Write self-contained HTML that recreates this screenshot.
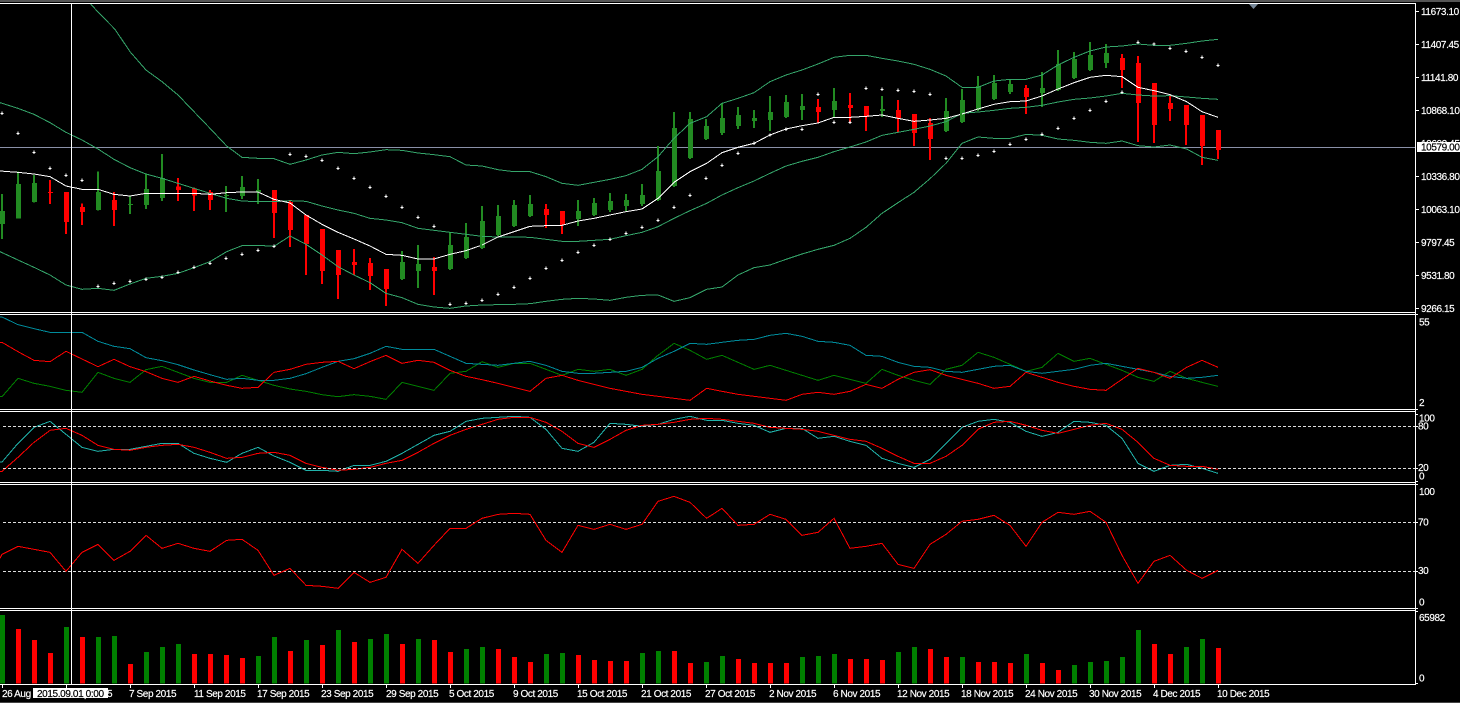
<!DOCTYPE html>
<html><head><meta charset="utf-8"><title>Chart</title>
<style>
html,body{margin:0;padding:0;background:#000;width:1460px;height:703px;overflow:hidden}
svg{display:block;position:absolute;left:0;top:0}
text{font-family:"Liberation Sans",sans-serif;font-size:10px;fill:#fff;stroke:#fff;stroke-width:.18px;letter-spacing:-.4px}
.l{fill:none;stroke-width:3;shape-rendering:crispEdges;stroke-linejoin:miter}
.u{stroke:#35a56a}.w{stroke:#fff}.t{stroke:#008b9b}.r{stroke:#f00}.g{stroke:#008000}.c{stroke:#20b2aa}
.sar{fill:none;stroke:none;marker-start:url(#p);marker-mid:url(#p);marker-end:url(#p)}
.wk{fill:none;stroke-width:6;shape-rendering:crispEdges}
.bd{fill:none;stroke-width:15;shape-rendering:crispEdges}
.vg{fill:none;stroke:#008000;stroke-width:15;shape-rendering:crispEdges}
.vr{fill:none;stroke:#f00;stroke-width:15;shape-rendering:crispEdges}
</style></head><body>
<svg width="1460" height="703" viewBox="0 0 1460 703" xmlns="http://www.w3.org/2000/svg">
<defs>
<marker id="p" markerUnits="userSpaceOnUse" markerWidth="12" markerHeight="12" refX="6" refY="6" overflow="visible"><path d="M1 6h10M6 1v10" fill="none" stroke="#fff" stroke-width="3.3" shape-rendering="crispEdges"/></marker>
<clipPath id="main"><rect x="0" y="4" width="1415" height="308"/></clipPath>
</defs>
<rect x="0" y="0" width="1460" height="703" fill="#000"/>
<rect x="0" y="0" width="1460" height="2" fill="#555"/>
<rect x="0" y="702" width="1460" height="1" fill="#444"/>

<!-- bid line -->
<rect x="0" y="147" width="1415" height="1" fill="#8a90a8"/>

<g clip-path="url(#main)">
<!-- Segment A -->
<g transform="scale(.33333)">
<path class="wk" stroke="#228b22" d="M6 582V717M54 514V655M102 525V608M294 514V632M390 590V642M438 520V627M486 462V603M678 558V636M726 528V597M774 537V612M1206 753V840M1254 735V864M1350 697V810M1398 669V777"/>
<path class="bd" stroke="#228b22" transform="translate(1.5 0)" d="M6 633V672M54 552V655M102 549V606M294 576V630M390 612V615M438 567V615M486 534V594M678 585V588M726 561V588M774 570V576M1206 786V837M1254 792V813M1350 735V807M1398 711V774"/>
<path class="wk" stroke="#f00" d="M150 540V612M198 576V702M246 610V675M342 576V678M534 534V603M582 562V633M630 570V630M822 570V714M870 603V741M918 645V825M966 687V852M1014 750V897M1062 747V825M1110 774V870M1158 807V918M1302 771V885"/>
<path class="bd" stroke="#f00" transform="translate(1.5 0)" d="M150 576V579M198 576V666M246 621V636M342 600V630M534 560V570M582 565V587M630 576V600M822 570V639M870 606V690M918 645V732M966 687V813M1014 750V825M1062 786V795M1110 789V828M1158 807V867M1302 801V813"/>
<polyline class="l u" points="272,12 294,36 345,88 390,155 438,210 486,245 534,285 582,335 630,385 680,438 726,472 774,475 822,476 870,493 918,480 966,465 1014,457 1062,461 1110,456 1158,449 1206,451 1254,459 1302,464 1350,470 1398,495 1446,498"/>
<polyline class="l u" points="0,308 54,325 102,343 150,368 198,397 246,420 294,447 342,478 390,503 438,522 486,535 534,550 582,565 630,580 680,595 726,603 774,605 822,605 870,602 918,604 966,618 1014,630 1062,640 1110,655 1158,660 1206,668 1254,685 1302,691 1350,697 1398,703 1446,709"/>
<polyline class="l u" points="0,755 54,780 102,802 150,825 198,855 246,868 294,865 342,871 390,852 438,835 486,829 534,820 582,803 630,785 680,755 726,737 774,736 822,739 870,708 918,733 966,765 1014,800 1062,825 1110,848 1158,880 1206,893 1254,913 1302,921 1350,925 1398,918 1446,915"/>
<polyline class="l w" points="0,513 54,517 102,522 150,530 198,558 246,568 294,568 342,583 390,588 438,580 486,580 534,580 582,580 630,583 680,578 726,576 774,576 822,598 870,609 918,645 966,673 1014,697 1062,717 1110,738 1158,763 1206,766 1254,777 1302,777 1350,763 1398,752 1446,735"/>
<polyline class="sar" points="6,340 54,400 102,457 150,505 198,526 246,541 294,859 342,850 390,844 438,838 486,832 534,817 582,802 630,790 678,775 726,763 774,751 822,739 870,463 918,469 966,481 1014,505 1062,535 1110,562 1158,589 1206,622 1254,652 1302,679 1350,913 1398,910"/>
</g>
<!-- Segment B -->
<g transform="translate(480 0) scale(.33333)">
<path class="wk" stroke="#228b22" d="M6 618V747M54 615V708M102 600V681M150 585V651M294 600V678M342 594V648M390 579V636M438 582V633M486 552V618M534 438V603M582 336V561M630 336V477M678 357V420M726 309V405M774 321V387M822 330V384M870 288V393M918 285V354M966 282V360M1062 264V354M1206 288V351M1398 294V396"/>
<path class="bd" stroke="#228b22" transform="translate(1.5 0)" d="M6 663V744M54 648V705M102 615V678M150 612V648M294 633V657M342 609V645M390 603V630M438 600V618M486 585V612M534 513V600M582 384V558M630 357V474M678 378V417M726 354V399M774 345V378M822 354V363M870 336V360M918 306V351M966 318V330M1062 303V330M1206 327V333M1398 333V393"/>
<path class="wk" stroke="#f00" d="M198 612V684M246 633V702M1014 297V369M1110 279V366M1158 318V393M1254 300V396M1302 342V438M1350 354V480"/>
<path class="bd" stroke="#f00" transform="translate(1.5 0)" d="M198 627V645M246 633V675M1014 321V336M1110 315V324M1158 318V351M1254 330V354M1302 342V399M1350 369V417"/>
<polyline class="l u" points="6,498 54,509 102,515 150,515 198,530 246,550 294,556 342,547 390,538 438,527 486,508 534,470 582,415 630,370 680,350 726,310 774,295 822,278 870,245 918,225 966,210 1014,192 1062,172 1110,166 1158,166 1206,175 1254,183 1302,193 1350,208 1398,228 1446,262"/>
<polyline class="l u" points="6,709 54,711 102,711 150,712 198,718 246,724 294,724 342,721 390,718 438,707 486,697 534,680 582,655 630,632 680,610 726,585 774,563 822,543 870,520 918,498 966,484 1014,472 1062,455 1110,441 1158,426 1206,406 1254,397 1302,388 1350,378 1398,365 1446,340"/>
<polyline class="l u" points="6,915 54,914 102,913 150,911 198,904 246,898 294,895 342,897 390,901 438,892 486,886 534,885 582,904 630,893 680,868 726,861 774,825 822,803 870,795 918,778 966,762 1014,748 1062,736 1110,715 1158,682 1206,640 1254,608 1302,577 1350,536 1398,490 1446,430"/>
<polyline class="l w" points="6,735 54,711 102,695 150,679 198,677 246,676 294,663 342,655 390,645 438,635 486,627 534,595 582,547 630,515 680,490 726,458 774,442 822,430 870,405 918,387 966,377 1014,369 1062,352 1110,352 1158,349 1206,345 1254,355 1302,364 1350,360 1398,355 1446,342"/>
<polyline class="sar" points="6,901 54,883 102,862 150,835 198,805 246,781 294,757 342,736 390,718 438,700 486,682 534,661 582,622 630,586 678,535 726,496 774,460 822,430 870,405 918,388 966,388 1014,283 1062,367 1110,367 1158,265 1206,268 1254,271 1302,274 1350,283 1398,475"/>
</g>
<!-- Segment C -->
<g transform="translate(960 0) scale(.33333)">
<path class="wk" stroke="#228b22" d="M6 267V369M54 228V333M102 225V300M150 237V282M246 216V321M294 150V273M342 156V237M390 126V213M438 132V204"/>
<path class="bd" stroke="#228b22" transform="translate(1.5 0)" d="M6 300V366M54 258V330M102 249V297M150 252V276M246 264V279M294 192V270M342 177V234M390 165V210M438 159V189"/>
<path class="wk" stroke="#f00" d="M198 255V342M486 162V264M534 168V426M582 249V429M630 288V363M678 315V435M726 345V495M774 390V477"/>
<path class="bd" stroke="#f00" transform="translate(1.5 0)" d="M198 264V291M486 174V210M534 189V309M582 249V375M630 309V327M678 315V375M726 345V438M774 390V450"/>
<polyline class="l u" points="6,262 54,262 102,243 150,238 198,238 246,225 294,195 342,172 390,153 438,141 486,138 534,132 582,136 630,136 680,130 726,123 774,118"/>
<polyline class="l u" points="6,340 54,336 102,331 150,325 198,322 246,316 294,306 342,298 390,294 438,288 486,280 534,285 582,288 630,287 680,291 726,295 774,298"/>
<polyline class="l u" points="6,430 54,411 102,415 150,415 198,403 246,406 294,417 342,421 390,427 438,430 486,423 534,437 582,441 630,435 680,447 726,472 774,481"/>
<polyline class="l w" points="6,342 54,327 102,313 150,305 198,303 246,288 294,267 342,248 390,232 438,226 486,230 534,262 582,272 630,284 680,305 726,335 774,352"/>
<polyline class="sar" points="6,475 54,466 102,454 150,433 198,418 246,403 294,385 342,355 390,331 438,304 486,277 534,127 582,132 630,145 678,154 726,172 774,196"/>
</g>
</g>

<!-- Oscillator pane + stochastic, y origin 310 -->
<g transform="translate(0 310) scale(.33333)">
<polyline class="l g" points="0,260 6,260 54,205 102,220 150,229 198,241 246,247 294,187 342,205 390,217 438,179 486,169 534,187 582,205 630,217 680,217 726,196 774,211 822,226 870,237 918,244 966,254 1014,260 1062,254 1110,259 1158,268 1206,217 1254,229 1302,241 1350,190 1398,184 1446,155"/>
<polyline class="l t" points="0,21 6,21 54,44 102,56 150,67 198,67 246,67 294,94 342,109 390,116 438,143 486,152 534,164 582,180 630,194 680,208 726,205 774,211 822,211 870,205 918,191 966,172 1014,154 1062,146 1110,130 1158,109 1206,118 1254,118 1302,118 1350,139 1398,160 1446,163"/>
<polyline class="l r" points="0,97 6,97 54,125 102,151 150,155 198,124 246,147 294,170 342,148 390,170 438,185 486,205 534,217 582,199 630,213 680,226 726,235 774,232 822,187 870,178 918,163 966,157 1014,154 1062,176 1110,155 1158,136 1206,160 1254,151 1302,157 1350,181 1398,199 1446,209"/>
<polyline class="l c" points="0,456 6,456 54,400 102,352 150,334 198,373 246,412 294,424 342,418 390,418 438,409 486,400 534,400 582,430 630,445 680,457 726,430 774,412 822,438 870,457 918,481 966,481 1014,484 1062,466 1110,466 1158,454 1206,430 1254,403 1302,376 1350,364 1398,334 1446,325"/>
<polyline class="l r" points="0,484 6,484 54,442 102,397 150,361 198,355 246,376 294,406 342,418 390,421 438,412 486,406 534,403 582,412 630,427 680,445 726,442 774,430 822,427 870,436 918,460 966,472 1014,481 1062,478 1110,472 1158,460 1206,451 1254,427 1302,400 1350,376 1398,358 1446,343"/>
</g>
<g transform="translate(480 310) scale(.33333)">
<polyline class="l g" points="6,155 54,172 102,160 150,160 198,178 246,196 294,178 342,184 390,178 438,196 486,178 534,136 582,100 630,121 680,148 726,136 774,157 822,178 870,166 918,181 966,196 1014,211 1062,196 1110,208 1158,220 1206,178 1254,196 1302,211 1350,223 1398,178 1446,166"/>
<polyline class="l t" points="6,163 54,166 102,160 150,154 198,166 246,184 294,190 342,190 390,187 438,184 486,172 534,145 582,124 630,100 680,103 726,97 774,91 822,88 870,76 918,70 966,79 1014,94 1062,97 1110,106 1158,136 1206,139 1254,157 1302,169 1350,172 1398,184 1446,187"/>
<polyline class="l r" points="6,209 54,220 102,232 150,244 198,205 246,196 294,211 342,223 390,235 438,244 486,253 534,259 582,265 630,271 680,235 726,244 774,253 822,259 870,265 918,271 966,253 1014,247 1062,253 1110,244 1158,223 1206,235 1254,208 1302,187 1350,179 1398,196 1446,208"/>
<polyline class="l c" points="6,325 54,322 102,319 150,322 198,358 246,415 294,424 342,397 390,340 438,343 486,349 534,343 582,328 630,319 680,331 726,331 774,340 822,346 870,367 918,355 966,355 1014,385 1062,379 1110,394 1158,406 1206,445 1254,460 1302,472 1350,448 1398,400 1446,352"/>
<polyline class="l r" points="6,343 54,328 102,322 150,322 198,337 246,364 294,400 342,412 390,388 438,361 486,346 534,343 582,337 630,328 680,325 726,328 774,334 822,340 870,352 918,355 966,358 1014,364 1062,376 1110,388 1158,394 1206,415 1254,439 1302,460 1350,460 1398,439 1446,406"/>
</g>
<g transform="translate(960 310) scale(.33333)">
<polyline class="l g" points="6,166 54,127 102,142 150,163 198,184 246,172 294,130 342,154 390,145 438,163 486,181 534,202 582,214 630,184 680,205 726,217 774,229"/>
<polyline class="l t" points="6,187 54,178 102,169 150,166 198,184 246,190 294,184 342,178 390,166 438,160 486,169 534,178 582,187 630,199 680,205 726,202 774,196"/>
<polyline class="l r" points="6,208 54,220 102,235 150,229 198,187 246,202 294,217 342,229 390,238 438,241 486,208 534,175 582,187 630,205 680,172 726,151 774,172"/>
<polyline class="l c" points="6,352 54,334 102,328 150,337 198,364 246,379 294,367 342,334 390,337 438,346 486,385 534,460 582,484 630,466 680,463 726,475 774,490"/>
<polyline class="l r" points="6,406 54,358 102,337 150,334 198,346 246,361 294,370 342,358 390,346 438,340 486,358 534,397 582,445 630,466 680,469 726,469 774,478"/>
</g>

<!-- dashed levels -->
<g stroke="#ddd" stroke-width="1" stroke-dasharray="3 2" shape-rendering="crispEdges">
<path d="M3 426.5H1415M3 468.5H1415M3 522.5H1415M3 571.5H1415"/>
</g>

<!-- RSI + Volume, y origin 480 -->
<g transform="translate(0 480) scale(.33333)">
<polyline class="l r" points="0,235 6,223 54,199 102,208 150,217 198,274 246,217 294,193 342,241 390,214 438,166 486,205 534,190 582,205 630,214 680,181 726,178 774,211 822,286 870,265 918,316 966,319 1014,325 1062,277 1110,307 1158,292 1206,208 1254,250 1302,196 1350,145 1398,145 1446,115"/>
<path class="vg" transform="translate(1.5 0)" d="M6 405V610M198 441V610M294 471V610M342 468V610M438 516V610M486 501V610M534 492V610M774 528V610M822 471V610M918 480V610M1014 450V610M1110 477V610M1158 462V610M1254 477V610M1398 507V610"/>
<path class="vr" transform="translate(1.5 0)" d="M54 447V610M102 480V610M150 519V610M246 471V610M390 552V610M582 522V610M630 522V610M678 525V610M726 534V610M870 513V610M966 495V610M1062 486V610M1206 492V610M1302 480V610M1350 516V610"/>
</g>
<g transform="translate(480 480) scale(.33333)">
<polyline class="l r" points="6,115 54,103 102,100 150,103 198,181 246,217 294,136 342,148 390,133 438,148 486,133 534,64 582,49 630,67 680,115 726,85 774,136 822,133 870,103 918,118 966,166 1014,157 1062,115 1110,205 1158,199 1206,190 1254,253 1302,265 1350,193 1398,163 1446,124"/>
<path class="vg" transform="translate(1.5 0)" d="M6 501V610M198 522V610M246 519V610M486 519V610M534 513V610M678 546V610M726 528V610M966 531V610M1014 528V610M1062 522V610M1254 516V610M1302 501V610"/>
<path class="vr" transform="translate(1.5 0)" d="M54 507V610M102 531V610M150 546V610M294 525V610M342 540V610M390 543V610M438 543V610M582 513V610M630 549V610M774 537V610M822 549V610M870 549V610M918 549V610M1110 537V610M1158 537V610M1206 540V610M1350 507V610M1398 531V610"/>
</g>
<g transform="translate(960 480) scale(.33333)">
<polyline class="l r" points="6,124 54,118 102,106 150,136 198,199 246,127 294,97 342,103 390,94 438,127 486,226 534,310 582,244 630,226 680,271 726,295 774,271"/>
<path class="vg" transform="translate(1.5 0)" d="M6 531V610M198 522V610M342 555V610M390 546V610M438 543V610M486 531V610M534 450V610M678 501V610M726 477V610"/>
<path class="vr" transform="translate(1.5 0)" d="M54 546V610M102 546V610M150 549V610M246 549V610M294 570V610M582 492V610M630 522V610M774 504V610"/>
</g>

<!-- frame lines -->
<g fill="#fff" shape-rendering="crispEdges">
<rect x="0" y="3" width="1416" height="1"/>
<rect x="0" y="312" width="1416" height="1"/>
<rect x="0" y="314" width="1416" height="1"/>
<rect x="0" y="409" width="1416" height="1"/>
<rect x="0" y="411" width="1416" height="1"/>
<rect x="0" y="482" width="1416" height="1"/>
<rect x="0" y="484" width="1416" height="1"/>
<rect x="0" y="608" width="1416" height="1"/>
<rect x="0" y="610" width="1416" height="1"/>
<rect x="0" y="684" width="1416" height="1"/>
<rect x="1415" y="3" width="1" height="682"/>
<!-- crosshair -->
<rect x="71" y="3" width="1" height="682"/>
<!-- right ticks -->
<rect x="1416" y="11" width="3" height="1"/><rect x="1416" y="44" width="3" height="1"/><rect x="1416" y="77" width="3" height="1"/><rect x="1416" y="110" width="3" height="1"/><rect x="1416" y="176" width="3" height="1"/><rect x="1416" y="209" width="3" height="1"/><rect x="1416" y="242" width="3" height="1"/><rect x="1416" y="275" width="3" height="1"/><rect x="1416" y="308" width="3" height="1"/>
<rect x="1416" y="314" width="2" height="1"/><rect x="1416" y="409" width="2" height="1"/><rect x="1416" y="414" width="2" height="1"/><rect x="1416" y="426" width="2" height="1"/><rect x="1416" y="468" width="2" height="1"/><rect x="1416" y="481" width="2" height="1"/><rect x="1416" y="484" width="2" height="1"/><rect x="1416" y="522" width="2" height="1"/><rect x="1416" y="571" width="2" height="1"/><rect x="1416" y="608" width="2" height="1"/><rect x="1416" y="611" width="2" height="1"/><rect x="1416" y="683" width="2" height="1"/>
<!-- date ticks -->
<rect x="2" y="685" width="1" height="3"/><rect x="66" y="685" width="1" height="3"/><rect x="130" y="685" width="1" height="3"/><rect x="194" y="685" width="1" height="3"/><rect x="258" y="685" width="1" height="3"/><rect x="322" y="685" width="1" height="3"/><rect x="386" y="685" width="1" height="3"/><rect x="450" y="685" width="1" height="3"/><rect x="514" y="685" width="1" height="3"/><rect x="578" y="685" width="1" height="3"/><rect x="642" y="685" width="1" height="3"/><rect x="706" y="685" width="1" height="3"/><rect x="770" y="685" width="1" height="3"/><rect x="834" y="685" width="1" height="3"/><rect x="898" y="685" width="1" height="3"/><rect x="962" y="685" width="1" height="3"/><rect x="1026" y="685" width="1" height="3"/><rect x="1090" y="685" width="1" height="3"/><rect x="1154" y="685" width="1" height="3"/><rect x="1218" y="685" width="1" height="3"/>
</g>

<!-- shift marker -->
<polygon points="1249,4 1258,4 1253.5,9" fill="#778899"/>

<!-- price axis -->
<text x="1421" y="15">11673.10</text>
<text x="1421" y="48">11407.45</text>
<text x="1421" y="81">11141.80</text>
<text x="1421" y="114">10868.10</text>
<text x="1421" y="147">10602.45</text>
<text x="1421" y="180">10336.80</text>
<text x="1421" y="213">10063.10</text>
<text x="1421" y="246">9797.45</text>
<text x="1421" y="279">9531.80</text>
<text x="1421" y="312">9266.15</text>
<rect x="1417" y="142" width="43" height="10" fill="#fff"/>
<text x="1421" y="150.5" style="fill:#000;stroke:#000">10579.00</text>

<text x="1419" y="325.5">55</text>
<text x="1419" y="406">2</text>
<text x="1419" y="421.5">100</text>
<text x="1418" y="429.5">80</text>
<text x="1418" y="471">20</text>
<text x="1419" y="479.5">0</text>
<text x="1419" y="495">100</text>
<text x="1418" y="525.5">70</text>
<text x="1418" y="574">30</text>
<text x="1419" y="605.5">0</text>
<text x="1419" y="621">65982</text>
<text x="1419" y="681.5">0</text>

<!-- date axis -->
<text x="2" y="697">26 Aug 2015</text>
<text x="65" y="697">1 Sep 2015</text>
<text x="129" y="697">7 Sep 2015</text>
<text x="194" y="697">11 Sep 2015</text>
<text x="257" y="697">17 Sep 2015</text>
<text x="321" y="697">23 Sep 2015</text>
<text x="386" y="697">29 Sep 2015</text>
<text x="449" y="697">5 Oct 2015</text>
<text x="513" y="697">9 Oct 2015</text>
<text x="577" y="697">15 Oct 2015</text>
<text x="641" y="697">21 Oct 2015</text>
<text x="705" y="697">27 Oct 2015</text>
<text x="769" y="697">2 Nov 2015</text>
<text x="833" y="697">6 Nov 2015</text>
<text x="897" y="697">12 Nov 2015</text>
<text x="961" y="697">18 Nov 2015</text>
<text x="1025" y="697">24 Nov 2015</text>
<text x="1089" y="697">30 Nov 2015</text>
<text x="1153" y="697">4 Dec 2015</text>
<text x="1217" y="697">10 Dec 2015</text>
<rect x="33" y="688" width="75" height="10" fill="#fff"/>
<text x="37" y="697" style="fill:#000;stroke:#000;letter-spacing:0" textLength="67">2015.09.01 0:00</text>
</svg>
</body></html>
